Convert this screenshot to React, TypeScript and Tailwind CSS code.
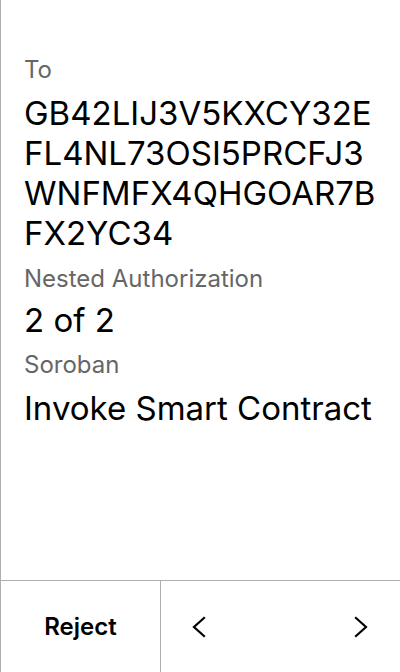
import React from 'react';

const Field = ({ label, value, className = '', gap = 'mt-[11px]' }: { label: string; value: string; className?: string; gap?: string }) => (
    <div className={className}>
        <div className="text-[24px] leading-[28px] text-[#666666]">{label}</div>
        <div className={`${gap} text-[33px] leading-[40px] text-black break-all`}>{value}</div>
    </div>
);

const Chevron = ({ dir }: { dir: 'left' | 'right' }) => (
    <svg width="24" height="24" viewBox="0 0 24 24" fill="none" stroke="black" strokeWidth="2.2" strokeLinecap="square" strokeLinejoin="miter">
        {dir === 'left' ? <polyline points="17,3 7,12 17,21" /> : <polyline points="7,3 17,12 7,21" />}
    </svg>
);

const App = () => {
    return (
        <div className="w-[400px] h-[672px] flex flex-col bg-white border-l border-[#b0b0b0] font-['Inter',sans-serif]">
            {/* Details */}
            <div className="flex-1 pt-[56px] pl-[23px] pr-[22px]">
                <Field label="To" value="GB42LIJ3V5KXCY32EFL4NL73OSI5PRCFJ3WNFMFX4QHGOAR7BFX2YC34" gap="mt-[9px]" />
                <Field className="mt-[12px]" label="Nested Authorization" value="2 of 2" gap="mt-[7px]" />
                <Field className="mt-[11px]" label="Soroban" value="Invoke Smart Contract" gap="mt-[9px]" />
            </div>

            {/* Footer */}
            <div className="h-[92px] flex border-t border-[#b0b0b0]">
                <div className="w-[160px] flex items-center justify-center border-r border-[#b0b0b0] text-[24px] font-semibold text-black">
                    Reject
                </div>
                <div className="flex-1 flex items-center justify-between pl-[26px] pr-[27px]">
                    <Chevron dir="left" />
                    <Chevron dir="right" />
                </div>
            </div>
        </div>
    );
};

export default App;
